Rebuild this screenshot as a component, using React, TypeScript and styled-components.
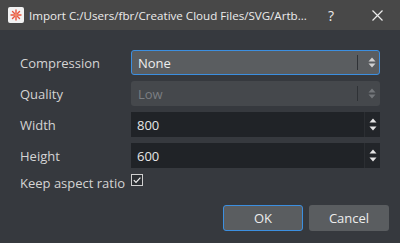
import React from "react";
import styled, { createGlobalStyle } from "styled-components";

const Global = createGlobalStyle`
  html, body { margin: 0; padding: 0; background: #36393e; }
  * { box-sizing: border-box; }
`;

const Dialog = styled.div`
  width: 400px;
  height: 243px;
  display: flex;
  flex-direction: column;
  background: #36393e;
  font-family: "Open Sans", "Noto Sans", sans-serif;
  font-size: 13px;
  color: #d6d6d6;
  overflow: hidden;
`;

const TitleBar = styled.div`
  height: 30px;
  flex: none;
  display: flex;
  align-items: center;
  background: #484848;
  padding-left: 8px;
  color: #ececec;
  font-size: 11.6px;
`;

const TitleText = styled.div`
  margin-left: 5px;
  flex: 1;
  min-width: 0;
  white-space: nowrap;
  overflow: hidden;
`;

const TitleButton = styled.div<{ $w: number }>`
  width: ${(p) => p.$w}px;
  flex: none;
  height: 30px;
  display: flex;
  align-items: center;
  justify-content: center;
  color: #ececec;
  font-size: 14px;
`;

const Body = styled.div`
  flex: 1;
  display: flex;
  flex-direction: column;
  padding: 20px 11px 12px 20px;
`;

const Form = styled.div`
  display: grid;
  grid-template-columns: 111px 249px;
  grid-auto-rows: 25px;
  row-gap: 6px;
`;

const Label = styled.div`
  display: flex;
  align-items: center;
  white-space: nowrap;
  color: #d4d4d4;
`;

const Combo = styled.div<{ $disabled?: boolean; $focus?: boolean }>`
  display: flex;
  align-items: center;
  border-radius: 3px;
  background: ${(p) => (p.$disabled ? "#45484c" : "#5a5d60")};
  border: 1px solid ${(p) => (p.$focus ? "#3c8fe0" : "transparent")};
  color: ${(p) => (p.$disabled ? "#7b7e82" : "#ededed")};
  padding-left: 6px;
`;

const ComboText = styled.div`
  flex: 1;
`;

const ComboSep = styled.div`
  width: 1px;
  height: 15px;
  background: #2f3236;
  margin-right: 8px;
`;

const ArrowBox = styled.div`
  width: 12px;
  display: flex;
  justify-content: center;
  margin-right: 1px;
`;

const Spin = styled.div`
  display: flex;
  background: #202327;
  color: #e6e6e6;
`;

const SpinText = styled.div`
  flex: 1;
  display: flex;
  align-items: center;
  padding-left: 6px;
`;

const SpinButtons = styled.div`
  width: 16px;
  display: flex;
  align-items: center;
  justify-content: center;
  border-left: 1px solid #2b2e32;
  background: #222529;
`;

const CheckRow = styled.div`
  display: grid;
  grid-template-columns: 111px 249px;
  height: 18px;
  margin-top: 6px;
`;

const CheckBox = styled.div`
  align-self: start;
  width: 12px;
  height: 12px;
  border: 1px solid #cfcfcf;
  background: #2c2f33;
  display: flex;
  align-items: center;
  justify-content: center;
`;

const Footer = styled.div`
  margin-top: auto;
  display: flex;
  justify-content: flex-end;
  gap: 6px;
`;

const Button = styled.div<{ $default?: boolean }>`
  width: 80px;
  height: 26px;
  border-radius: 3px;
  background: #5a5d60;
  border: 1px solid ${(p) => (p.$default ? "#3c8fe0" : "transparent")};
  display: flex;
  align-items: center;
  justify-content: center;
  color: #ededed;
`;

const Arrows = ({ color, gap }: { color: string; gap: number }) => (
  <svg width="8" height={10 + gap} viewBox={`0 0 8 ${10 + gap}`}>
    <polygon points="4,0.5 7.5,4.5 0.5,4.5" fill={color} />
    <polygon points={`0.5,${5.5 + gap} 7.5,${5.5 + gap} 4,${9.5 + gap}`} fill={color} />
  </svg>
);

const AppIcon = () => (
  <svg width="16" height="16" viewBox="0 0 16 16">
    <rect x="0" y="0" width="16" height="16" rx="2" fill="#f2f2f2" />
    <g stroke="#e9553f" strokeWidth="1.4" strokeLinecap="round">
      <line x1="8" y1="3" x2="8" y2="13" />
      <line x1="3" y1="8" x2="13" y2="8" />
      <line x1="4.5" y1="4.5" x2="11.5" y2="11.5" />
      <line x1="11.5" y1="4.5" x2="4.5" y2="11.5" />
    </g>
    <circle cx="8" cy="8" r="1.8" fill="#f08a6a" />
  </svg>
);

export default function App() {
  return (
    <Dialog>
      <Global />
      <TitleBar>
        <AppIcon />
        <TitleText>Import C:/Users/fbr/Creative Cloud Files/SVG/Artb...</TitleText>
        <TitleButton $w={46}>?</TitleButton>
        <TitleButton $w={46}>
          <svg width="11" height="11" viewBox="0 0 11 11">
            <path d="M0.5 0.5 L10.5 10.5 M10.5 0.5 L0.5 10.5" stroke="#ececec" strokeWidth="1.2" />
          </svg>
        </TitleButton>
      </TitleBar>
      <Body>
        <Form>
          <Label>Compression</Label>
          <Combo $focus>
            <ComboText>None</ComboText>
            <ComboSep />
            <ArrowBox>
              <Arrows color="#d0d0d0" gap={1} />
            </ArrowBox>
          </Combo>
          <Label>Quality</Label>
          <Combo $disabled>
            <ComboText>Low</ComboText>
            <ComboSep />
            <ArrowBox>
              <Arrows color="#74777b" gap={1} />
            </ArrowBox>
          </Combo>
          <Label>Width</Label>
          <Spin>
            <SpinText>800</SpinText>
            <SpinButtons>
              <Arrows color="#e6e6e6" gap={3} />
            </SpinButtons>
          </Spin>
          <Label>Height</Label>
          <Spin>
            <SpinText>600</SpinText>
            <SpinButtons>
              <Arrows color="#e6e6e6" gap={3} />
            </SpinButtons>
          </Spin>
        </Form>
        <CheckRow>
          <Label>Keep aspect ratio</Label>
          <CheckBox>
            <svg width="10" height="10" viewBox="0 0 10 10">
              <path d="M1.8 5.2 L4 7.4 L8.4 2.6" stroke="#f0f0f0" strokeWidth="1.2" fill="none" />
            </svg>
          </CheckBox>
        </CheckRow>
        <Footer>
          <Button $default>OK</Button>
          <Button>Cancel</Button>
        </Footer>
      </Body>
    </Dialog>
  );
}
